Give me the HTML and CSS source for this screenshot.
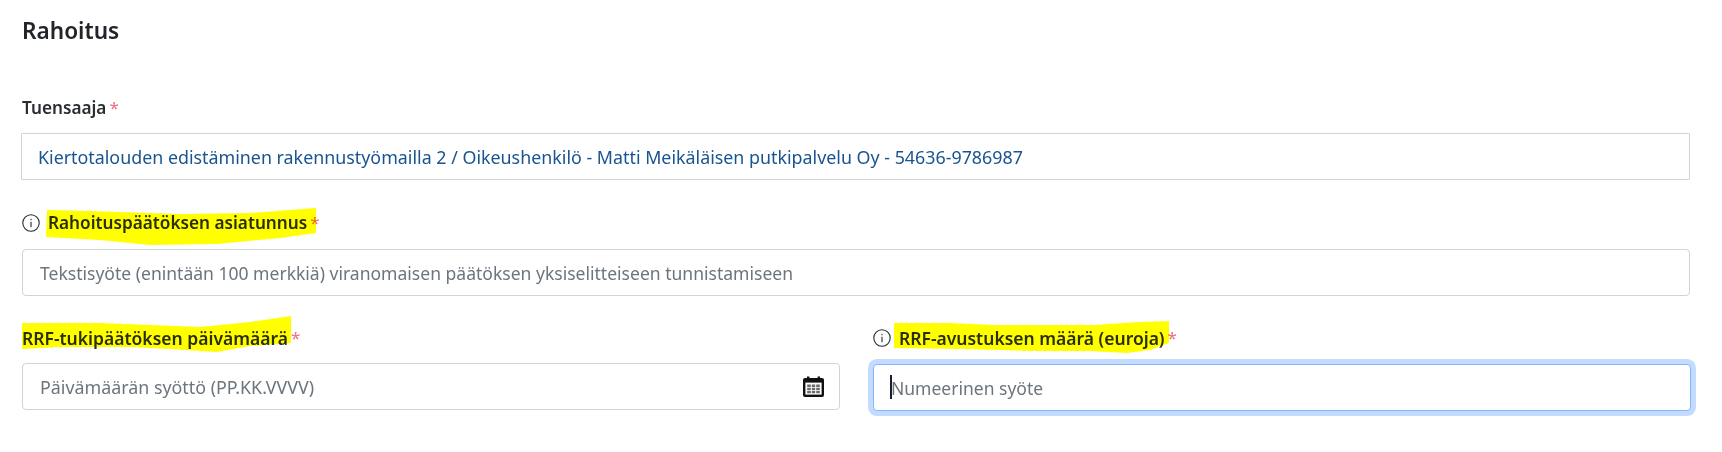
FILE: index.html
```html
<!DOCTYPE html>
<html lang="fi">
<head>
<meta charset="utf-8">
<title>Rahoitus</title>
<link rel="stylesheet" href="styles.css">
</head>
<body>
<main class="page">
  <h1 class="title">Rahoitus</h1>
  <div class="field field-first">
    <div class="label-row"><label class="label">Tuensaaja</label><span class="req">*</span></div>
    <input class="input input-value" type="text" readonly value="Kiertotalouden edistäminen rakennustyömailla 2 / Oikeushenkilö - Matti Meikäläisen putkipalvelu Oy - 54636-9786987">
  </div>
  <div class="field field-next">
    <div class="label-row label-row-loose">
      <svg class="info" viewBox="0 0 18 18"><circle cx="9" cy="9" r="8.2" fill="none" stroke="#1f2933" stroke-width="1.1"/><rect x="8.45" y="7.8" width="1.1" height="5.4" fill="#1f2933"/><rect x="8.45" y="4.8" width="1.1" height="1.4" fill="#1f2933"/></svg>
      <label class="label">Rahoituspäätöksen asiatunnus</label><span class="req">*</span>
    </div>
    <input class="input" type="text" placeholder="Tekstisyöte (enintään 100 merkkiä) viranomaisen päätöksen yksiselitteiseen tunnistamiseen">
  </div>
  <div class="columns">
    <div class="field">
      <div class="label-row"><label class="label label-wide">RRF-tukipäätöksen päivämäärä</label><span class="req">*</span></div>
      <div class="control">
        <input class="input input-date" type="text" placeholder="Päivämäärän syöttö (PP.KK.VVVV)">
        <svg class="calendar" viewBox="0 0 21 21">
          <path d="M2 2H4V0.6H6.4V2H14.6V0.6H17V2H19A2 2 0 0 1 21 4V19A2 2 0 0 1 19 21H2A2 2 0 0 1 0 19V4A2 2 0 0 1 2 2Z" fill="#111"/>
          <rect x="2.4" y="6.6" width="16.2" height="12" fill="#fff"/>
          <path d="M4.2 8.4h3.6v2.5H4.2zM8.8 8.4h3.4v2.5H8.8zM13.2 8.4h3.6v2.5h-3.6zM4.2 11.8h3.6v2.5H4.2zM8.8 11.8h3.4v2.5H8.8zM13.2 11.8h3.6v2.5h-3.6zM4.2 15.1h3.6v2.1H4.2zM8.8 15.1h3.4v2.1H8.8zM13.2 15.1h3.6v2.1h-3.6z" fill="#6a6a6a"/>
        </svg>
      </div>
    </div>
    <div class="field">
      <div class="label-row">
        <svg class="info" viewBox="0 0 18 18"><circle cx="9" cy="9" r="8.2" fill="none" stroke="#1f2933" stroke-width="1.1"/><rect x="8.45" y="7.8" width="1.1" height="5.4" fill="#1f2933"/><rect x="8.45" y="4.8" width="1.1" height="1.4" fill="#1f2933"/></svg>
        <label class="label label-wide">RRF-avustuksen määrä (euroja)</label><span class="req">*</span>
      </div>
      <div class="control">
        <input class="input input-focus" type="text" placeholder="Numeerinen syöte">
        <span class="caret"></span>
      </div>
    </div>
  </div>
</main>
<svg class="highlights" viewBox="0 0 1722 452">
  <path d="M47 210L90 211L180 214L250 213L316 208V233L280 238L217 244L150 245L100 240L46 237Z"/>
  <path d="M22 323L100 323L150 325L200 327L250 322L291 316V343L250 346L217 352L170 349L130 347L60 347L22 349Z"/>
  <path d="M894 323L950 323L993 325L1093 325L1140 322L1169 321V343L1150 350L1127 353L1090 351L1033 351L960 349L894 348Z"/>
</svg>
</body>
</html>
```

FILE: styles.css
```css
* { box-sizing: border-box; }
html, body { margin: 0; padding: 0; background: #fff; }
body { font-family: "Noto Sans", "Open Sans", sans-serif; color: #212529; width: 1722px; height: 452px; overflow: hidden; position: relative; }
.page { padding: 16px 32px 0 22px; }
.title { margin: 0; font-size: 22.6px; line-height: 30px; font-weight: 600; }
.field { display: flex; flex-direction: column; min-width: 0; }
.field-first { margin-top: 50px; }
.field-next { margin-top: 31px; }
.label-row { display: flex; align-items: center; height: 24px; margin-bottom: 13px; }
.label-row-loose { margin-bottom: 14px; }
.label { font-size: 17.2px; font-weight: 600; line-height: 24px; color: #2a2e33; }
.label-wide { font-size: 17.5px; }
.req { color: #ee6b7e; font-size: 17px; line-height: 24px; margin-left: 3px; }
.info { width: 18px; height: 18px; margin-right: 8px; flex: none; }
.input { display: block; width: 100%; height: 47px; padding: 0 16px 0 17px; border: 1px solid #ced4da; border-radius: 4px; background: #fff; font-family: inherit; font-size: 17.55px; color: #1a5490; outline: none; }
.input::placeholder { color: #6c757d; opacity: 1; }
.input-value { width: calc(100% + 1px); margin-left: -1px; padding-left: 16px; border-radius: 1px; font-size: 17.85px; }
.input-date { font-size: 17.85px; }
.input-focus { margin-top: 1px; border-color: #86b7fe; box-shadow: 0 0 0 5px #c2dbfe; font-size: 17.5px; }
.columns { display: grid; grid-template-columns: 818px 818px; column-gap: 33px; margin-top: 30px; }
.control { position: relative; }
.calendar { position: absolute; top: 13px; right: 16px; width: 21px; height: 21px; }
.caret { position: absolute; left: 17px; top: 12px; width: 2px; height: 24px; background: #1c1c30; }
.highlights { position: absolute; left: 0; top: 0; width: 1722px; height: 452px; pointer-events: none; mix-blend-mode: multiply; }
.highlights path { fill: #ffff00; }
```
